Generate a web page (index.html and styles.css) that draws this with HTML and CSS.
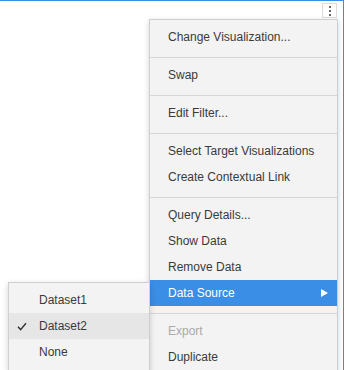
FILE: index.html
```html
<!DOCTYPE html>
<html lang="en">
<head>
  <meta charset="UTF-8">
  <meta name="viewport" content="width=device-width, initial-scale=1.0">
  <title>Visualization menu</title>
  <link rel="stylesheet" href="styles.css">
</head>
<body>
  <div class="panel">
    <button class="kebab" aria-label="More">
      <span class="dot"></span>
      <span class="dot"></span>
      <span class="dot"></span>
    </button>

    <!-- context menu -->
    <ul class="menu">
      <li class="item">Change Visualization...</li>
      <li class="divider"></li>
      <li class="item">Swap</li>
      <li class="divider"></li>
      <li class="item">Edit Filter...</li>
      <li class="divider"></li>
      <li class="item">Select Target Visualizations</li>
      <li class="item">Create Contextual Link</li>
      <li class="divider"></li>
      <li class="item">Query Details...</li>
      <li class="item">Show Data</li>
      <li class="item">Remove Data</li>
      <li class="item active has-sub">Data Source <span class="arrow"></span></li>
      <li class="divider"></li>
      <li class="item disabled">Export</li>
      <li class="item">Duplicate</li>
    </ul>

    <!-- data source submenu -->
    <ul class="menu submenu">
      <li class="item">Dataset1</li>
      <li class="item selected">
        <svg class="check" width="10" height="9" viewBox="0 0 10 9">
          <path d="M1 4.8 L3.6 7.6 L9 1.2" fill="none" stroke="#333" stroke-width="1.4"/>
        </svg>
        Dataset2
      </li>
      <li class="item">None</li>
    </ul>
  </div>
</body>
</html>
```

FILE: styles.css
```css
html, body {
  margin: 0;
  height: 100%;
  background-color: #fff;
  overflow: hidden;
}
body {
  font-family: "Liberation Sans", Arial, sans-serif;
  font-size: 12px;
  color: #3a3a3a;
}
.panel {
  position: relative;
  width: 344px;
  height: 370px;
  border-top: 1px solid #3a8ee6;
  border-right: 1px solid #3a8ee6;
  box-sizing: border-box;
}
.kebab {
  position: absolute;
  top: 2px;
  right: 6px;
  width: 15px;
  height: 15px;
  padding: 0;
  background: #fff;
  border: 1px solid #dcdcdc;
  display: flex;
  flex-direction: column;
  align-items: center;
  justify-content: center;
  gap: 2px;
}
.dot {
  width: 2px;
  height: 2px;
  background: #666;
}
.menu {
  position: absolute;
  top: 18px;
  left: 149px;
  width: 189px;
  margin: 0;
  padding: 4px 0 6px;
  list-style: none;
  background: #f3f3f3;
  border: 1px solid #cfcfcf;
  box-sizing: border-box;
  box-shadow: 0 2px 6px rgba(0,0,0,0.18);
}
.item {
  height: 26px;
  line-height: 26px;
  padding-left: 18px;
  white-space: nowrap;
}
.item.active {
  background: #3b8ee5;
  color: #fff;
  display: flex;
  align-items: center;
  justify-content: space-between;
  padding-right: 9px;
}
.item.disabled {
  color: #aaa;
}
.arrow {
  width: 0;
  height: 0;
  border-top: 4px solid transparent;
  border-bottom: 4px solid transparent;
  border-left: 7px solid #fff;
}
.divider {
  height: 1px;
  margin: 7px 0 4px;
  background: #d6d6d6;
}
.submenu {
  top: 281px;
  left: 8px;
  width: 142px;
  z-index: 2;
}
.submenu .item {
  position: relative;
  padding-left: 30px;
}
.submenu .item.selected {
  background: #e6e6e6;
}
.check {
  position: absolute;
  left: 8px;
  top: 9px;
}
```
